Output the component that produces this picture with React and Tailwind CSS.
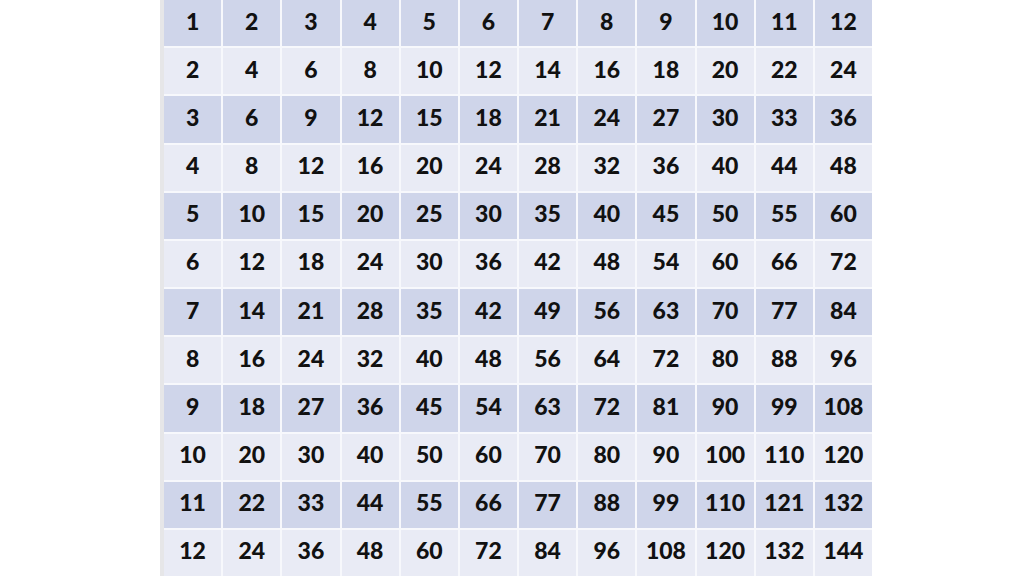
const N = 12;

export default function App() {
  const rows = Array.from({ length: N }, (_, i) => i + 1);
  return (
    <div className="w-[1024px] h-[576px] bg-white flex overflow-hidden">
      <div className="w-[160px]" />
      <div className="w-[4px] h-[576px] bg-[#e6e6e8]" />
      <div
        className="w-[708px] h-[576px] grid grid-cols-12 grid-rows-12 gap-[2px] bg-[#f7f8fc]"
        style={{ fontFamily: 'Lato, "Open Sans", sans-serif' }}
      >
        {rows.map(r =>
          rows.map(c => (
            <div
              key={`${r}-${c}`}
              className={`flex items-center justify-center pb-1 text-[23px] font-black leading-none text-[#111] ${r % 2 === 1 ? 'bg-[#cfd5ea]' : 'bg-[#e9ebf5]'}`}
            >
              {r * c}
            </div>
          ))
        )}
      </div>
    </div>
  );
}
